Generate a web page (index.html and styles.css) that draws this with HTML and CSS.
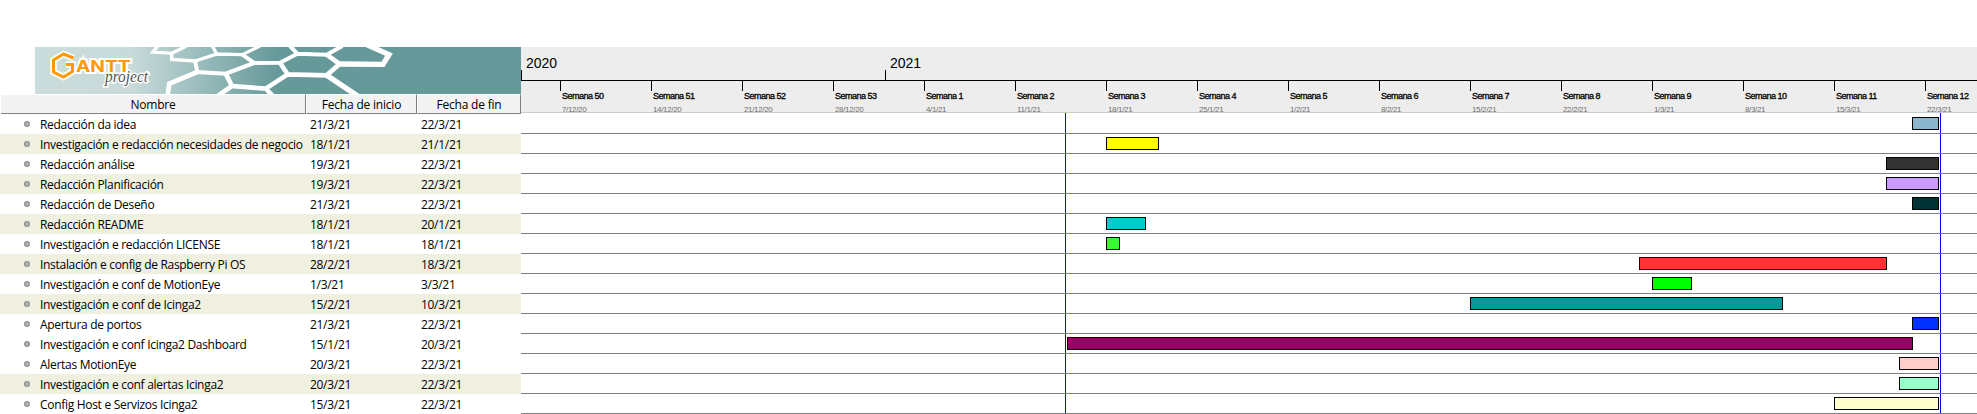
FILE: index.html
```
<!DOCTYPE html>
<html lang="es">
<head>
<meta charset="utf-8">
<title>GanttProject</title>
<link rel="stylesheet" href="styles.css">
</head>
<body>
<div class="app">
  <section class="tasks">
    <svg class="banner" width="486" height="47" viewBox="0 0 486 47">
      <defs>
        <linearGradient id="sea" x1="0" x2="1" y1="0" y2="0">
          <stop offset="0" stop-color="#cbdcdc"/>
          <stop offset=".2" stop-color="#c8dada"/>
          <stop offset=".5" stop-color="#669999"/>
          <stop offset="1" stop-color="#669999"/>
        </linearGradient>
      </defs>
      <rect width="486" height="47" fill="url(#sea)"/>
      <g transform="translate(100 -5) scale(.3333)" fill="none" stroke="#fff" stroke-width="10">
        <path d="M68 12L54 30L110 34L155 12M110 34L110 52L180 57L245 36L232 12M245 36L322 38L375 12"/>
        <path stroke-width="12" d="M180 57L187 90L272 95L358 63L322 38M358 63L435 62L487 35L465 12M487 35L575 38L622 12"/>
        <path stroke-width="14" d="M187 90L103 125L98 160M272 95L291 132L392 140L458 97L435 62M291 132L250 160M392 140L412 160M458 97L575 100L614 66L575 38"/>
        <path stroke-width="16" d="M614 66L744 67L762 38L695 8M575 100L668 162"/>
      </g>
      <path class="mark halo" d="M38.5 11L28.5 7L18.5 13V25L28.5 30L37.5 24.5V17.5H31"/>
      <text class="name" x="41" y="25" textLength="54.5" lengthAdjust="spacingAndGlyphs">ANTT</text>
      <text class="sub" x="70" y="34.5" textLength="43" lengthAdjust="spacingAndGlyphs">project</text>
      <path class="mark" d="M38.5 11L28.5 7L18.5 13V25L28.5 30L37.5 24.5V17.5H31"/>
    </svg>
    <div class="head"><span>Nombre</span><span>Fecha de inicio</span><span>Fecha de fin</span></div>
    <div class="row"><i></i><b>Redacción da idea</b><span>21/3/21</span><span>22/3/21</span></div>
    <div class="row alt"><i></i><b>Investigación e redacción necesidades de negocio</b><span>18/1/21</span><span>21/1/21</span></div>
    <div class="row"><i></i><b>Redacción análise</b><span>19/3/21</span><span>22/3/21</span></div>
    <div class="row alt"><i></i><b>Redacción Planificación</b><span>19/3/21</span><span>22/3/21</span></div>
    <div class="row"><i></i><b>Redacción de Deseño</b><span>21/3/21</span><span>22/3/21</span></div>
    <div class="row alt"><i></i><b>Redacción README</b><span>18/1/21</span><span>20/1/21</span></div>
    <div class="row"><i></i><b>Investigación e redacción LICENSE</b><span>18/1/21</span><span>18/1/21</span></div>
    <div class="row alt"><i></i><b>Instalación e config de Raspberry Pi OS</b><span>28/2/21</span><span>18/3/21</span></div>
    <div class="row"><i></i><b>Investigación e conf de MotionEye</b><span>1/3/21</span><span>3/3/21</span></div>
    <div class="row alt"><i></i><b>Investigación e conf de Icinga2</b><span>15/2/21</span><span>10/3/21</span></div>
    <div class="row"><i></i><b>Apertura de portos</b><span>21/3/21</span><span>22/3/21</span></div>
    <div class="row"><i></i><b>Investigación e conf Icinga2 Dashboard</b><span>15/1/21</span><span>20/3/21</span></div>
    <div class="row"><i></i><b>Alertas MotionEye</b><span>20/3/21</span><span>22/3/21</span></div>
    <div class="row alt"><i></i><b>Investigación e conf alertas Icinga2</b><span>20/3/21</span><span>22/3/21</span></div>
    <div class="row"><i></i><b>Config Host e Servizos Icinga2</b><span>15/3/21</span><span>22/3/21</span></div>
  </section>
  <section class="chart">
    <div class="years"><div class="y2020">2020</div><div class="y2021">2021</div></div>
    <div class="weeks">
      <div>Semana 50<small>7/12/20</small></div>
      <div>Semana 51<small>14/12/20</small></div>
      <div>Semana 52<small>21/12/20</small></div>
      <div>Semana 53<small>28/12/20</small></div>
      <div>Semana 1<small>4/1/21</small></div>
      <div>Semana 2<small>11/1/21</small></div>
      <div>Semana 3<small>18/1/21</small></div>
      <div>Semana 4<small>25/1/21</small></div>
      <div>Semana 5<small>1/2/21</small></div>
      <div>Semana 6<small>8/2/21</small></div>
      <div>Semana 7<small>15/2/21</small></div>
      <div>Semana 8<small>22/2/21</small></div>
      <div>Semana 9<small>1/3/21</small></div>
      <div>Semana 10<small>8/3/21</small></div>
      <div>Semana 11<small>15/3/21</small></div>
      <div>Semana 12<small>22/3/21</small></div>
    </div>
    <div class="lanes">
      <div class="limit start"></div>
      <div class="limit end"></div>
      <div class="lane first"><div class="bar" style="margin-left:1391px;width:27px;background:#8cb6ce"></div></div>
      <div class="lane"><div class="bar" style="margin-left:585px;width:53px;background:#ffff00"></div></div>
      <div class="lane"><div class="bar" style="margin-left:1365px;width:53px;background:#333333"></div></div>
      <div class="lane"><div class="bar" style="margin-left:1365px;width:53px;background:#cc99ff"></div></div>
      <div class="lane"><div class="bar" style="margin-left:1391px;width:27px;background:#003333"></div></div>
      <div class="lane"><div class="bar" style="margin-left:585px;width:40px;background:#00cccc"></div></div>
      <div class="lane"><div class="bar" style="margin-left:585px;width:14px;background:#33ff33"></div></div>
      <div class="lane"><div class="bar" style="margin-left:1118px;width:248px;background:#ff3333"></div></div>
      <div class="lane"><div class="bar" style="margin-left:1131px;width:40px;background:#00ff00"></div></div>
      <div class="lane"><div class="bar" style="margin-left:949px;width:313px;background:#009999"></div></div>
      <div class="lane"><div class="bar" style="margin-left:1391px;width:27px;background:#0033ff"></div></div>
      <div class="lane"><div class="bar" style="margin-left:546px;width:846px;background:#990066"></div></div>
      <div class="lane"><div class="bar" style="margin-left:1378px;width:40px;background:#ffcccc"></div></div>
      <div class="lane"><div class="bar" style="margin-left:1378px;width:40px;background:#99ffcc"></div></div>
      <div class="lane"><div class="bar" style="margin-left:1313px;width:105px;background:#ffffcc"></div></div>
    </div>
  </section>
</div>
</body>
</html>
```
FILE: styles.css
```
* { box-sizing: border-box; }
body { margin: 0; background: #fff; color: #000; overflow: hidden; }
.app { display: flex; width: 1977px; height: 414px; padding-top: 47px; }

.tasks { width: 521px; flex: none; font: 12px/20px "Open Sans", "Noto Sans", sans-serif; letter-spacing: -0.3px; }
.banner { display: block; margin-left: 35px; }
.mark { fill: none; stroke: #ff9900; stroke-width: 3; }
.mark.halo { stroke: #fff; stroke-width: 6.5; }
.name { font: bold 16.5px Inter, sans-serif; letter-spacing: 0; fill: #ff9900; stroke: #fff; stroke-width: 4; paint-order: stroke; }
.sub { font: italic 17px "Liberation Serif", serif; letter-spacing: 0; fill: #555; stroke: #fff; stroke-width: 3; paint-order: stroke; }

.head { display: grid; grid-template-columns: 305px 111px 104px; padding-left: 1px; height: 20px; background: #fff; }
.head span { height: 20px; border-right: 1px solid #808080; border-bottom: 1px solid #808080; border-top: 1px solid #fff; background: #f3f3f3; text-align: center; line-height: 20px; letter-spacing: -0.2px; }
.head span + span { border-left: 1px solid #fff; }

.row { display: grid; grid-template-columns: 40px 270px 111px 100px; height: 20px; white-space: nowrap; line-height: 22px; }
.row.alt { background: #eff0e0; }
.row b { font-weight: normal; }
.row i { width: 6px; height: 6px; margin: 7px 0 0 24px; border-radius: 50%; background: radial-gradient(circle, #bbb 10%, #77777b 90%); }

.chart { flex: 1; min-width: 0; font-family: "Liberation Sans", Arial, sans-serif; }
.years { display: flex; height: 34px; background: #ededed; border-bottom: 1px solid #000; align-items: flex-end; font-size: 14px; }
.years div { height: 33px; padding: 8px 0 0 5px; line-height: 16px; background: linear-gradient(#000, #000) left bottom / 1px 10px no-repeat; }
.y2020 { width: 364px; }
.weeks { display: flex; height: 32px; padding-left: 39px; overflow: hidden; background: #ededed; border-bottom: 1px solid #ccc; }
.weeks div { flex: none; width: 91px; padding: 10px 0 0 2px; font-size: 9px; line-height: 11px; letter-spacing: -0.5px; -webkit-text-stroke: 0.3px #000; white-space: nowrap; background: linear-gradient(#000, #000) left top / 1px 10px no-repeat; }
.weeks small { display: block; margin-top: 3px; font-size: 8px; line-height: 10px; letter-spacing: -0.35px; color: #707070; -webkit-text-stroke: 0; }

.lanes { position: relative; }
.lane { position: relative; height: 20px; padding-top: 3px; border-bottom: 1px solid #808080; }
.lane.first { height: 21px; padding-top: 4px; }
.bar { height: 13px; border: 1px solid #000; }
.limit { position: absolute; top: 0; width: 1px; height: 300px; background: #0000f0; }
.start { left: 544px; }
.end { left: 1419px; }
```
